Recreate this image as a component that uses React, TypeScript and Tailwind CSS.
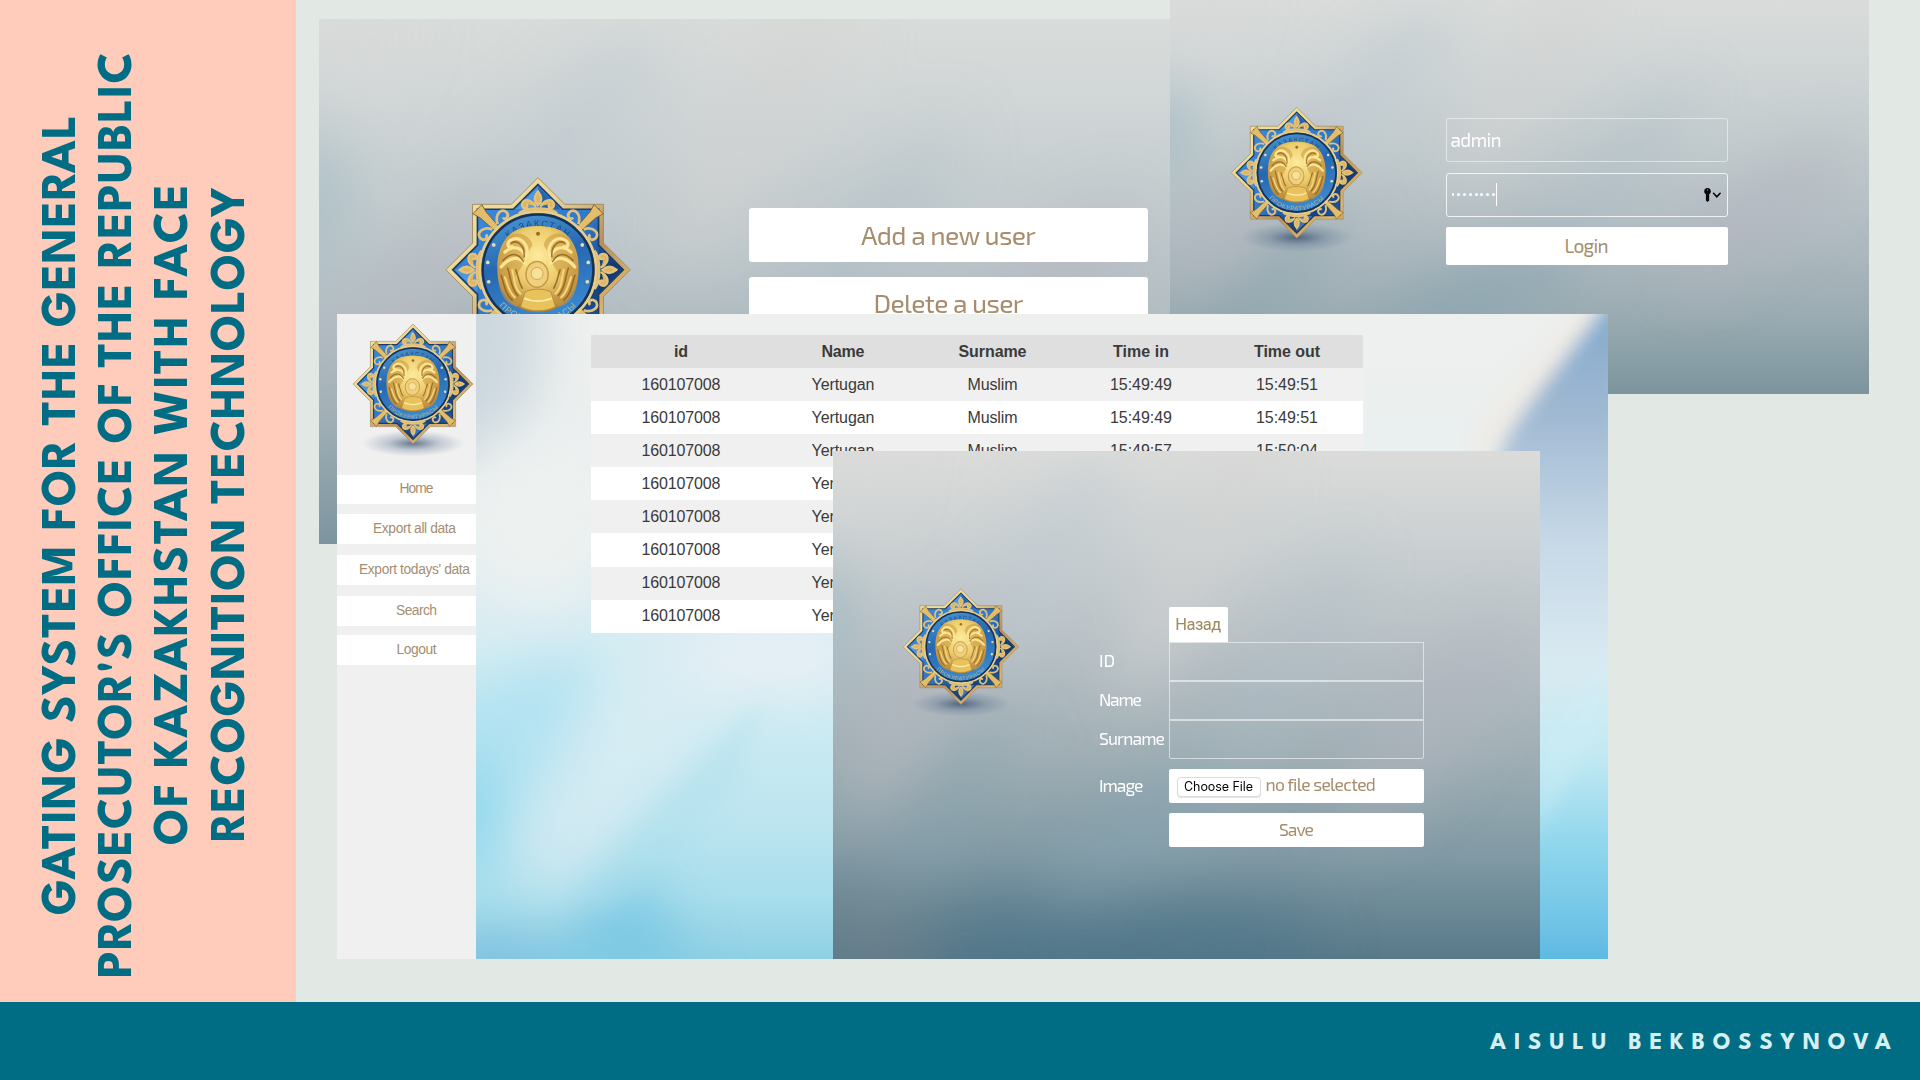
import React, { useId, useLayoutEffect, useRef, useState } from "react";

/** Text whose tracking is tuned so that the line fills the given length. */
function Fit({ w, children }: { w: number; children: string }) {
  const ref = useRef<HTMLSpanElement>(null);
  const [ls, setLs] = useState(0);
  useLayoutEffect(() => {
    const el = ref.current;
    if (!el) return;
    el.style.letterSpacing = "0px";
    const r = el.getBoundingClientRect();
    const natural = Math.max(r.width, r.height);
    const next = (w - natural) / Math.max(1, children.length - 1);
    el.style.letterSpacing = `${next}px`;
    setLs(next);
  }, [w, children]);
  return (
    <span
      ref={ref}
      className="inline-block whitespace-nowrap"
      style={{ letterSpacing: `${ls}px`, marginInlineEnd: `${-ls}px` }}
    >
      {children}
    </span>
  );
}

const STAR =
  "M0-100 29-71H71V-29L100 0 71 29V71H29L0 100-29 71H-71V29L-100 0-71-29V-71H-29Z";

function Emblem({ className }: { className: string }) {
  const id = useId().replace(/[^a-zA-Z0-9]/g, "");
  const u = (n: string) => `url(#${n}${id})`;
  const fleur =
    "M0-85C-5-79-4-74 0-70 4-74 5-79 0-85ZM-3-69C-9-79-19-76-17-69-15-65-10-67-12-71M3-69C9-79 19-76 17-69 15-65 10-67 12-71M-20-62C-12-68 12-68 20-62";
  const horse =
    "M-6-27C-10-42-30-44-36-30-44-16-46 4-41 22-37 34-30 38-24 40L-14 34C-24 28-28 18-25 8-18-2-12-12-10-20Z";
  return (
    <svg viewBox="-105 -105 210 230" className={className} aria-hidden="true">
      <defs>
        <linearGradient id={"rim" + id} x1="0" y1="0" x2="1" y2="1">
          <stop offset="0" stopColor="#f3e2a4" />
          <stop offset=".35" stopColor="#ead69a" />
          <stop offset=".6" stopColor="#b98f5a" />
          <stop offset=".8" stopColor="#dcb872" />
          <stop offset="1" stopColor="#a8773b" />
        </linearGradient>
        <linearGradient id={"blue" + id} x1="0" y1="0" x2="1" y2="1">
          <stop offset="0" stopColor="#3f8fe2" />
          <stop offset=".5" stopColor="#2f78cc" />
          <stop offset=".72" stopColor="#15407c" />
          <stop offset="1" stopColor="#2d7ad0" />
        </linearGradient>
        <linearGradient id={"ring" + id} x1="0" y1="0" x2=".3" y2="1">
          <stop offset="0" stopColor="#4b9ad6" />
          <stop offset=".5" stopColor="#2668b2" />
          <stop offset="1" stopColor="#3888d0" />
        </linearGradient>
        <radialGradient id={"gold" + id} cx=".5" cy=".35" r=".65">
          <stop offset="0" stopColor="#fdeb9b" />
          <stop offset=".5" stopColor="#edcc6c" />
          <stop offset="1" stopColor="#ab7c33" />
        </radialGradient>
        <radialGradient id={"shade" + id}>
          <stop offset="0" stopColor="#2a4263" stopOpacity=".7" />
          <stop offset=".5" stopColor="#3c587c" stopOpacity=".26" />
          <stop offset="1" stopColor="#4d6a8c" stopOpacity="0" />
        </radialGradient>
        <path id={"top" + id} d="M-47 0A47 47 0 0 1 47 0" />
        <path id={"bot" + id} d="M-56 2A56 56 0 0 0 56 2" />
      </defs>
      <ellipse cx="0" cy="99" rx="86" ry="22" fill={u("shade")} />
      <path d={STAR} fill={u("rim")} stroke="#a08a5c" strokeWidth="1" />
      <path d={STAR} fill={u("blue")} stroke="#1f3c60" strokeWidth="2" transform="scale(.925)" />
      <path d="M0-90-24-66H0ZM-90 0-66 24V0ZM0 90 24 66H0Z" fill="#6ab4f4" opacity=".45" />
      <path d="M0-90 24-66H0ZM90 0 66 24V0ZM90 0 66-24V0Z" fill="#0c2c5c" opacity=".35" />
      {[45, 135, 225, 315].map((a) => (
        <g key={a} transform={`rotate(${a})`} fill="#e2bd6c" stroke="#6f4c1d" strokeWidth=".8">
          <path d="M-3-60-4.500-84-7-93H7L4.500-84 3-60Z" />
          <path
            d="M-4-66C-9-76-20-76-20-68-19-62-13-63-13-67M4-66C9-76 20-76 20-68 19-62 13-63 13-67"
            fill="none"
            stroke="#dfc07c"
            strokeWidth="3"
          />
        </g>
      ))}
      {[0, 90, 180, 270].map((a) => (
        <path
          key={a}
          d={fleur}
          transform={`rotate(${a})`}
          fill="#dfb45d"
          stroke="#e2c27c"
          strokeWidth="2.600"
          strokeLinecap="round"
        />
      ))}
      <circle r="63" fill="none" stroke="#e6cd88" strokeWidth="3" />
      <circle r="60" fill={u("ring")} stroke="#1c3152" strokeWidth="2.600" />
      <text
        fontFamily="'Liberation Sans', sans-serif"
        fontSize="10"
        letterSpacing="1.500"
        fill="#244b7c"
        textAnchor="middle"
      >
        <textPath href={`#top${id}`} startOffset="50%">
          ҚАЗАҚСТАН
        </textPath>
      </text>
      <text
        fontFamily="'Liberation Sans', sans-serif"
        fontSize="9.500"
        letterSpacing="1"
        fill="#b9b68c"
        textAnchor="middle"
      >
        <textPath href={`#bot${id}`} startOffset="50%">
          ПРОКУРАТУРАСЫ
        </textPath>
      </text>
      {[-1, 1].map((s) => (
        <g key={s} fill="#e8dfae">
          <circle cx={s * 48} cy="-27" r="2" />
          <circle cx={s * 54.500} cy="-8" r="2" />
          <circle cx={s * 53.500} cy="13" r="2" />
        </g>
      ))}
      <path
        d="M-24-43C-10-49 10-49 24-43 38-36 45-18 44 0 44 20 34 36 17 43 6 47-6 47-17 43-34 36-44 20-44 0-45-18-38-36-24-43Z"
        fill={u("gold")}
      />
      {[-1, 1].map((s) => (
        <g key={s} transform={`scale(${s} 1)`} fill="none" strokeLinecap="round">
          <path d={horse} fill="#c8973f" opacity=".55" />
          <path
            d="M-12-16C-10-28-20-38-30-32-35-28-32-23-28-25M-13-12C-16-24-26-28-36-19M-14-7C-22-16-32-13-40-3"
            stroke="#fbe695"
            strokeWidth="3.400"
          />
          <path
            d="M-15-14C-14-26-22-33-29-29M-16-9C-22-20-31-18-38-10M-40 6C-36 18-36 26-28 33M-33-2C-29 8-31 18-22 28M-24 0C-21 8-21 14-17 20"
            stroke="#8a5b1e"
            strokeWidth="1.700"
            opacity=".8"
          />
          <path d="M-36 8C-32 18-32 24-25 30M-28 0C-25 10-27 18-19 26" stroke="#f5d679" strokeWidth="2.200" />
        </g>
      ))}
      <ellipse cx="-1" cy="5" rx="12" ry="14" fill="#f0d07a" stroke="#c69a4b" strokeWidth="1.600" />
      <circle cx="-1" cy="4" r="6.500" fill="#f7e29a" stroke="#cfa24c" strokeWidth="1" />
      <path d="M-14 24C-6 20 6 20 14 24L19 40C8 46-8 46-19 40Z" fill="#e9c25c" stroke="#b98a3a" strokeWidth="1" />
      <path d="M-15 31C-6 35 6 35 15 31" fill="none" stroke="#fdeea8" strokeWidth="2" />
      <circle cx="0" cy="-39" r="2.200" fill="#9b6c28" />
    </svg>
  );
}

const MIST_STOPS = ["#d9dcda", "#ced4d5", "#c0c9cc", "#b0bbc1", "#9bacb2", "#7b949e"];
const MIST_DEEP_STOPS = ["#dbdcda", "#c9cfd1", "#b6bfc4", "#a0afb5", "#8099a4", "#587989"];

/** Soft grey-blue photographic backdrop with diagonal light. */
function MistBackdrop({ stops, deep = false }: { stops: string[]; deep?: boolean }) {
  const id = useId().replace(/[^a-zA-Z0-9]/g, "");
  return (
    <svg viewBox="0 0 700 394" preserveAspectRatio="none" className="absolute inset-0 h-full w-full" aria-hidden="true">
      <defs>
        <linearGradient id={"mb" + id} x1="0" y1="0" x2="0" y2="1">
          {stops.map((c, i) => (
            <stop key={c} offset={i / (stops.length - 1)} stopColor={c} />
          ))}
        </linearGradient>
        <filter id={"mf" + id} x="-100%" y="-100%" width="300%" height="300%">
          <feGaussianBlur stdDeviation="26" />
        </filter>
      </defs>
      <rect width="700" height="394" fill={`url(#mb${id})`} />
      <g filter={`url(#mf${id})`}>
        <ellipse cx="30" cy="30" rx="60" ry="22" fill="#dadada" opacity=".5" transform="rotate(-45 30 30)" />
        <ellipse cx="-5" cy="130" rx="22" ry="55" fill="#98b6c1" opacity=".7" />
        <ellipse cx="200" cy="90" rx="110" ry="28" fill="#bcc6d0" opacity=".55" transform="rotate(-45 200 90)" />
        <ellipse cx="360" cy="80" rx="130" ry="32" fill="#d4d3d2" opacity=".6" transform="rotate(-55 360 80)" />
        <ellipse cx="440" cy="180" rx="130" ry="24" fill="#adbdc6" opacity=".45" transform="rotate(-50 440 180)" />
        <ellipse cx="80" cy="205" rx="110" ry="30" fill="#b6b7be" opacity=".6" transform="rotate(-50 80 205)" />
        <ellipse cx="590" cy="215" rx="110" ry="32" fill="#b2b4bd" opacity=".55" transform="rotate(-40 590 215)" />
        <ellipse cx="90" cy="290" rx="120" ry="22" fill="#89a4ae" opacity=".6" transform="rotate(-45 90 290)" />
        <ellipse cx="310" cy="295" rx="110" ry="28" fill="#88a4b0" opacity=".7" transform="rotate(-20 310 295)" />
        {deep && <ellipse cx="290" cy="385" rx="200" ry="36" fill="#4d778b" opacity=".65" />}
        {deep && <ellipse cx="40" cy="390" rx="60" ry="60" fill="#6d7f8a" opacity=".6" />}
      </g>
    </svg>
  );
}

function SkyBackdrop() {
  return (
    <svg
      viewBox="0 0 1132 645"
      preserveAspectRatio="none"
      className="absolute inset-0 h-full w-full"
      aria-hidden="true"
    >
      <defs>
        <linearGradient id="skyBase" x1="0" y1="0" x2="0" y2="1">
          <stop offset="0" stopColor="#eef0ee" />
          <stop offset=".28" stopColor="#e9eff0" />
          <stop offset=".45" stopColor="#dbedf3" />
          <stop offset=".6" stopColor="#d0ecf3" />
          <stop offset=".78" stopColor="#bde5f0" />
          <stop offset=".9" stopColor="#a9deec" />
          <stop offset="1" stopColor="#8fd0e4" />
        </linearGradient>
        <linearGradient id="skyRight" x1="0" y1="0" x2="0" y2="1">
          <stop offset="0" stopColor="#7aa6cb" />
          <stop offset=".18" stopColor="#9fb8d2" />
          <stop offset=".36" stopColor="#c6d8e6" />
          <stop offset=".54" stopColor="#d9eaf2" />
          <stop offset=".66" stopColor="#c3e9f3" />
          <stop offset=".78" stopColor="#93d8ed" />
          <stop offset=".9" stopColor="#70c4e6" />
          <stop offset="1" stopColor="#4cafdc" />
        </linearGradient>
        <filter id="soft10" x="-50%" y="-50%" width="200%" height="200%">
          <feGaussianBlur stdDeviation="9" />
        </filter>
        <filter id="soft26" x="-80%" y="-80%" width="260%" height="260%">
          <feGaussianBlur stdDeviation="26" />
        </filter>
      </defs>
      <rect width="1132" height="645" fill="url(#skyBase)" />
      <g filter="url(#soft26)">
        <ellipse cx="-10" cy="20" rx="75" ry="130" fill="#ccd7de" />
        <ellipse cx="60" cy="200" rx="80" ry="90" fill="#edf1f0" />
        <path d="M-60 390 60 350 130 340 60 480-20 560-60 640Z" fill="#b2e2f1" />
        <ellipse cx="-4" cy="500" rx="24" ry="60" fill="#84d5ea" />
        <path d="M170 330 340 320 230 420 130 540 60 590 40 530Z" fill="#dcecf3" opacity=".7" />
        <path d="M70 665 110 600 170 560 220 665Z" fill="#76c5e4" opacity=".8" />
        <ellipse cx="10" cy="650" rx="70" ry="22" fill="#7dbde0" />
        <ellipse cx="300" cy="340" rx="90" ry="40" fill="#e6eff4" />
      </g>
      <g filter="url(#soft10)">
        <path d="M290 382 200 470 150 520 110 580 130 600 180 560 260 470Z" fill="#a6deec" opacity=".3" />
        <path d="M1150-30 1128-8 1062 76 1030 124 1006 190 1010 680H1150Z" fill="url(#skyRight)" />
        <path d="M1126-4 1104-4 1000 110 1000 160Z" fill="#f0e9e2" opacity=".7" />
        <path d="M1132 400 1060 520V440L1132 350Z" fill="#cdeef5" opacity=".5" />
      </g>
    </svg>
  );
}

const COLUMNS = "grid-cols-[180px_144px_155px_142px_150px]";
const HEAD = [
  { t: "Name", w: 43 },
  { t: "Surname", w: 68 },
  { t: "Time in", w: 56 },
  { t: "Time out", w: 66 },
];
const ROWS: string[][] = [
  ["Muslim", "15:49:49", "15:49:51"],
  ["Muslim", "15:49:49", "15:49:51"],
  ["Muslim", "15:49:57", "15:50:04"],
  [],
  [],
  [],
  [],
  [],
];
const CELL_WIDTHS = [50, 62, 62];

function MenuWindow() {
  return (
    <section className="absolute left-[319px] top-[19px] flex h-[525px] w-[851px]">
      <MistBackdrop stops={MIST_STOPS} />
      <div className="relative w-[430px] shrink-0 pl-[122px] pt-[153.500px]">
        <Emblem className="h-[212px] w-[194px]" />
      </div>
      <div className="relative flex w-[399px] flex-col gap-[15px] pt-[189px] font-['Exo_2',Roboto,sans-serif] text-[26.500px] leading-none text-[#a68d6c]">
        <div className="flex h-[54px] items-center justify-center rounded-[3px] bg-white">
          <Fit w={175}>Add a new user</Fit>
        </div>
        <div className="flex h-[54px] items-center justify-center rounded-[3px] bg-white pb-px">
          <Fit w={150}>Delete a user</Fit>
        </div>
      </div>
    </section>
  );
}

function LoginWindow() {
  return (
    <section className="absolute left-[1170px] top-0 flex h-[394px] w-[699px]">
      <MistBackdrop stops={MIST_STOPS} />
      <div className="relative w-[275.500px] shrink-0 pl-[58px] pt-[104px]">
        <Emblem className="h-[150.500px] w-[137.500px]" />
      </div>
      <div className="relative flex w-[282px] flex-col pt-[118px] font-['Exo_2',Roboto,sans-serif] text-[19px] leading-none">
        <div className="flex h-[44px] items-center rounded-[3px] border border-white/50 pb-px pl-[4px] text-white">
          <Fit w={51}>admin</Fit>
        </div>
        <div className="mt-[10.500px] flex h-[44px] items-center rounded-[3px] border border-white/80 pl-[5px] pr-[6px]">
          <div className="flex gap-[2.900px]">
            {Array.from({ length: 8 }, (_, i) => (
              <span key={i} className="size-[2.900px] rounded-full bg-white" />
            ))}
          </div>
          <span className="ml-px h-[23px] w-px bg-white" />
          <svg viewBox="0 0 18 14" className="ml-auto h-[14px] w-[18px]" aria-hidden="true">
            <path
              d="M4.500 0C6.700 0 7.800 1.400 7.800 3.200 7.800 4.500 7.200 5.600 6.200 6.200V12.500L4.600 14 2.900 12.500V6.200C1.900 5.600 1.200 4.500 1.200 3.200 1.200 1.400 2.300 0 4.500 0Z"
              fill="#060606"
            />
            <circle cx="4.500" cy="2" r=".7" fill="#8a959c" />
            <path d="M10.500 5.300 13.800 8.900 17.100 5.300" fill="none" stroke="#060606" strokeWidth="1.600" strokeLinecap="round" />
          </svg>
        </div>
        <div className="mt-[10px] flex h-[38px] items-center justify-center rounded-[2px] bg-white pb-px text-[#a68d6c]">
          <Fit w={44}>Login</Fit>
        </div>
      </div>
    </section>
  );
}

const NAV = [
  { t: "Home", w: 34, nudge: "pl-[20px]", gap: "" },
  { t: "Export all data", w: 83, nudge: "pl-[16px]", gap: "mt-[10px]" },
  { t: "Export todays' data", w: 111, nudge: "pl-[16px]", gap: "mt-[11.500px]" },
  { t: "Search", w: 41, nudge: "pl-[20px]", gap: "mt-[11.500px]" },
  { t: "Logout", w: 40, nudge: "pl-[20px]", gap: "mt-[9.500px]" },
];

function RecordsWindow() {
  return (
    <section className="absolute left-[337px] top-[314px] flex h-[645px] w-[1271px]">
      <nav className="flex w-[139px] shrink-0 flex-col bg-[#f0f0f0]">
        <Emblem className="ml-[12.500px] mt-[7px] h-[138px] w-[126px] shrink-0" />
        <div className="mt-[15.500px] flex flex-col font-['Liberation_Sans',Arial,sans-serif] text-[13.800px] leading-none text-[#a48e73]">
          {NAV.map((n) => (
            <div key={n.t} className={`flex h-[29.500px] items-center justify-center bg-white ${n.nudge} ${n.gap}`}>
              <Fit w={n.w}>{n.t}</Fit>
            </div>
          ))}
        </div>
      </nav>
      <div className="relative flex-1">
        <SkyBackdrop />
        <div className="relative ml-[115px] mt-[21px] w-[771.500px] font-['Liberation_Sans',Arial,sans-serif] text-[16px] leading-none text-[#3a3a3a]">
          <div className={`grid h-[33px] items-center justify-items-center bg-[#dfdfdf] font-bold ${COLUMNS}`}>
            <span>id</span>
            {HEAD.map((h) => (
              <Fit key={h.t} w={h.w}>
                {h.t}
              </Fit>
            ))}
          </div>
          {ROWS.map((r, i) => (
            <div
              key={i}
              className={`grid h-[33.100px] items-center justify-items-center ${COLUMNS} ${i % 2 ? "bg-white" : "bg-[#f0f0f0]"}`}
            >
              <Fit w={79}>160107008</Fit>
              <Fit w={63}>Yertugan</Fit>
              {r.map((c, k) => (
                <Fit key={k} w={CELL_WIDTHS[k]}>
                  {c}
                </Fit>
              ))}
            </div>
          ))}
        </div>
      </div>
    </section>
  );
}

function AddUserWindow() {
  return (
    <section className="absolute left-[833px] top-[451px] flex h-[508px] w-[707px] font-['Exo_2',Roboto,sans-serif] text-[17.500px] leading-none text-white">
      <MistBackdrop stops={MIST_DEEP_STOPS} deep />
      <div className="relative w-[266px] shrink-0 pl-[66.500px] pt-[135px]">
        <Emblem className="h-[133px] w-[121.800px]" />
      </div>
      <div className="relative grid w-[325px] grid-cols-[70px_255px] grid-rows-[35px_39px_39px_39px_43.500px_44px] self-start pt-[156px]">
        <span />
        <div className="flex w-[58.500px] items-center justify-center rounded-t-[2px] bg-white pt-px font-[Roboto,sans-serif] text-[16.500px] text-[#a0895f]">
          <Fit w={46}>Назад</Fit>
        </div>
        <div className="flex items-center pb-px">
          <span>ID</span>
        </div>
        <div className="border border-white/55" />
        <div className="flex items-center pb-px">
          <Fit w={43}>Name</Fit>
        </div>
        <div className="border border-white/55" />
        <div className="flex items-center pb-px">
          <Fit w={66}>Surname</Fit>
        </div>
        <div className="rounded-b-[2px] border border-white/55" />
        <div className="flex items-center pt-[10px]">
          <Fit w={44.5}>Image</Fit>
        </div>
        <div className="mt-[10px] flex h-[33.500px] items-center rounded-[2px] bg-white pl-[7.500px] text-[#a68d6c]">
          <span className="mt-[2px] flex h-[20px] w-[84px] items-center justify-center rounded-[4px] border border-[#dcdcdc] bg-white font-[Inter,sans-serif] text-[12.500px] text-black shadow-[0_1px_1px_rgba(0,0,0,0.12)]">
            <Fit w={69}>Choose File</Fit>
          </span>
          <span className="-mt-[2px] ml-[5px]">
            <Fit w={110}>no file selected</Fit>
          </span>
        </div>
        <span />
        <div className="mt-[10px] flex h-[34px] items-center justify-center rounded-[2px] bg-white text-[#a68d6c]">
          <Fit w={35}>Save</Fit>
        </div>
      </div>
    </section>
  );
}

export default function App() {
  return (
    <div className="flex h-[1080px] w-[1920px] flex-col overflow-hidden bg-[#e2e8e3]">
      <div className="flex h-[1002px] shrink-0">
        <aside className="flex w-[296px] shrink-0 items-center bg-[#ffcbba] pl-[36px] pt-[28px]">
          <h1 className="flex rotate-180 flex-col items-center font-['League_Spartan','Josefin_Sans',Lato,sans-serif] text-[49px] font-bold leading-[56.200px] text-[#006d85] [writing-mode:vertical-rl]">
            <span className="block w-[56.200px]">
              <Fit w={800}>GATING SYSTEM FOR THE GENERAL</Fit>
            </span>
            <span className="block w-[56.200px]">
              <Fit w={926}>PROSECUTOR'S OFFICE OF THE REPUBLIC</Fit>
            </span>
            <span className="block w-[56.200px]">
              <Fit w={661}>OF KAZAKHSTAN WITH FACE</Fit>
            </span>
            <span className="block w-[56.200px]">
              <Fit w={655}>RECOGNITION TECHNOLOGY</Fit>
            </span>
          </h1>
        </aside>
        <main className="flex-1">
          <MenuWindow />
          <LoginWindow />
          <RecordsWindow />
          <AddUserWindow />
        </main>
      </div>
      <footer className="flex h-[78px] shrink-0 items-center justify-end bg-[#006d85] pr-[29px] pt-[4px] font-['League_Spartan','Josefin_Sans',Lato,sans-serif] text-[24px] font-bold text-[#d5eff2]">
        <Fit w={401}>AISULU BEKBOSSYNOVA</Fit>
      </footer>
    </div>
  );
}
